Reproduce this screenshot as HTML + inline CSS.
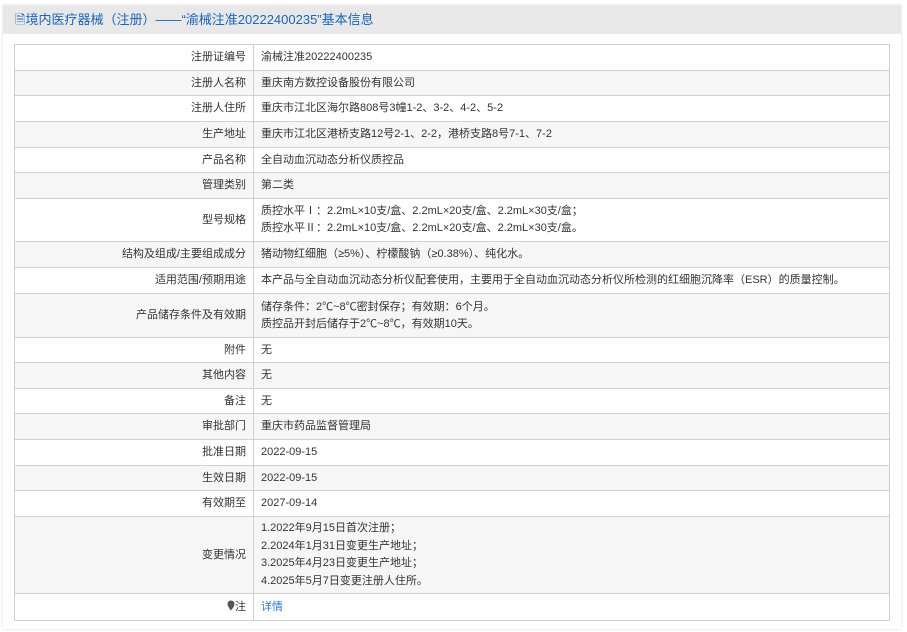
<!DOCTYPE html>
<html><head><meta charset="utf-8"><style>
body{margin:0;background:#fff;width:907px;height:632px;overflow:hidden;font-family:"Liberation Sans","Noto Sans CJK SC",sans-serif;}
.wrap{position:absolute;left:3px;top:5px;width:898px;height:624px;background:#fff;box-shadow:0 0 3px #ddd;}
.hd{height:29px;background:#e8e8e8;color:#1a64b8;font-size:13px;line-height:29px;padding-left:12px;}
table{position:absolute;left:11px;top:39px;width:876px;border-collapse:collapse;font-size:11px;color:#333;}
td{border:1px solid #d0d0d0;padding:0 7px;line-height:17px;}
td.l{width:224px;text-align:right;}
tr:nth-child(even) td{background:#f6f6f6;}
a{color:#2a7ad0;text-decoration:none;}
</style></head><body>
<div class="wrap"><div class="hd">🗎境内医疗器械（注册）——“渝械注准20222400235”基本信息</div>
<table>
<tr style="height:26px"><td class="l">注册证编号</td><td>渝械注准20222400235</td></tr>
<tr style="height:25px"><td class="l">注册人名称</td><td>重庆南方数控设备股份有限公司</td></tr>
<tr style="height:26px"><td class="l">注册人住所</td><td>重庆市江北区海尔路808号3幢1-2、3-2、4-2、5-2</td></tr>
<tr style="height:26px"><td class="l">生产地址</td><td>重庆市江北区港桥支路12号2-1、2-2，港桥支路8号7-1、7-2</td></tr>
<tr style="height:25px"><td class="l">产品名称</td><td>全自动血沉动态分析仪质控品</td></tr>
<tr style="height:26px"><td class="l">管理类别</td><td>第二类</td></tr>
<tr style="height:43px"><td class="l">型号规格</td><td>质控水平Ⅰ：2.2mL×10支/盒、2.2mL×20支/盒、2.2mL×30支/盒；<br>质控水平Ⅱ：2.2mL×10支/盒、2.2mL×20支/盒、2.2mL×30支/盒。</td></tr>
<tr style="height:26px"><td class="l">结构及组成/主要组成成分</td><td>猪动物红细胞（≥5%）、柠檬酸钠（≥0.38%）、纯化水。</td></tr>
<tr style="height:26px"><td class="l">适用范围/预期用途</td><td>本产品与全自动血沉动态分析仪配套使用，主要用于全自动血沉动态分析仪所检测的红细胞沉降率（ESR）的质量控制。</td></tr>
<tr style="height:44px"><td class="l">产品储存条件及有效期</td><td>储存条件：2℃~8℃密封保存；有效期：6个月。<br>质控品开封后储存于2℃~8℃，有效期10天。</td></tr>
<tr style="height:25px"><td class="l">附件</td><td>无</td></tr>
<tr style="height:26px"><td class="l">其他内容</td><td>无</td></tr>
<tr style="height:25px"><td class="l">备注</td><td>无</td></tr>
<tr style="height:26px"><td class="l">审批部门</td><td>重庆市药品监督管理局</td></tr>
<tr style="height:26px"><td class="l">批准日期</td><td>2022-09-15</td></tr>
<tr style="height:25px"><td class="l">生效日期</td><td>2022-09-15</td></tr>
<tr style="height:26px"><td class="l">有效期至</td><td>2027-09-14</td></tr>
<tr style="height:77px"><td class="l">变更情况</td><td style="line-height:17.5px">1.2022年9月15日首次注册；<br>2.2024年1月31日变更生产地址；<br>3.2025年4月23日变更生产地址；<br>4.2025年5月7日变更注册人住所。</td></tr>
<tr style="height:27px"><td class="l"><svg width="8" height="11" viewBox="0 0 8 11" style="vertical-align:-1px"><path d="M4 0.5C1.9 0.5 0.5 2 0.5 4c0 2.5 3.5 6.5 3.5 6.5S7.5 6.5 7.5 4C7.5 2 6.1 0.5 4 0.5z" fill="#555"/></svg>注</td><td><a>详情</a></td></tr>
</table></div>
</body></html>
